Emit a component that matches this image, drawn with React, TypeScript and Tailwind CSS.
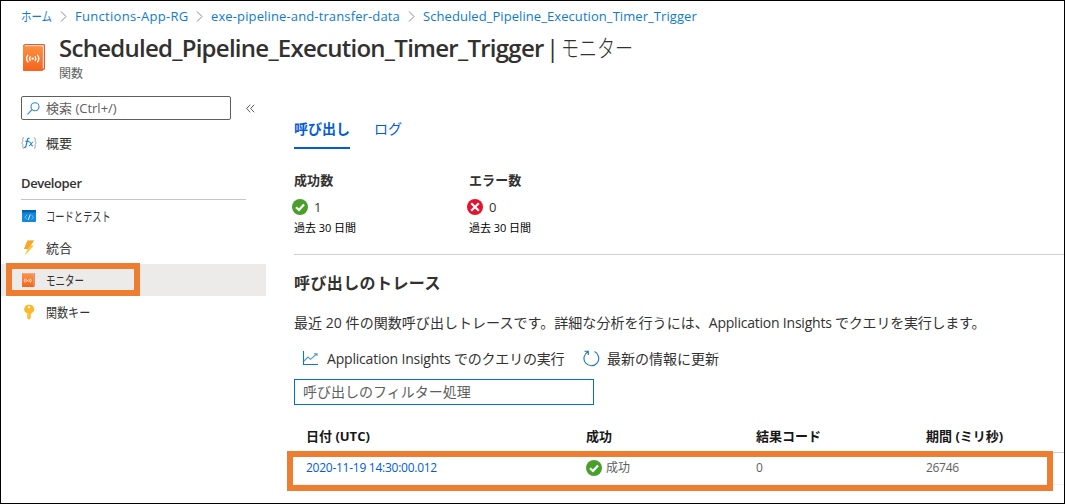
import type { ReactNode } from "react";

function Chevron() {
  return (
    <svg className="h-[11px] w-[7px] shrink-0" viewBox="0 0 7 11" fill="none" stroke="#8a8886" strokeWidth="1">
      <path d="M1 0.5 L6 5.5 L1 10.5" />
    </svg>
  );
}

function BookIcon({ className }: { className: string }) {
  return (
    <svg className={className} viewBox="0 0 22 27" fill="none" preserveAspectRatio="none">
      <defs>
        <linearGradient id="book" x1="0" y1="0" x2="0" y2="1">
          <stop offset="0" stopColor="#fc9040" />
          <stop offset="1" stopColor="#f4631e" />
        </linearGradient>
      </defs>
      <path d="M2.5 0 H20.8 Q22 0 22 1.2 V24.5 Q22 25.8 20.8 25.8 L19 27 H1.2 Q0 27 0 25.8 V2.5 Q0 0 2.5 0Z" fill="#dd6033" />
      <path d="M2.2 1.2 H20.8 V24.6 H19.6 V2.4 H1.4 Q1.4 1.2 2.2 1.2Z" fill="#fff3ea" />
      <path d="M0 2.5 H18 Q19.4 2.5 19.4 3.8 V27 H1.2 Q0 27 0 25.8Z" fill="url(#book)" />
      <circle cx="9.7" cy="14.6" r="1.2" fill="#fff" />
      <path d="M7.2 12.6 Q5.9 14.6 7.2 16.6 M12.2 12.6 Q13.5 14.6 12.2 16.6 M4.9 11.2 Q2.2 14.6 4.9 18 M14.5 11.2 Q17.2 14.6 14.5 18" stroke="#fff" strokeWidth="1.3" strokeLinecap="round" />
    </svg>
  );
}

function FunctionIcon() {
  return (
    <svg className="h-4 w-4" viewBox="0 0 16 16" fill="none">
      <path d="M3 2.5 Q1.8 2.5 1.8 4 V6.7 L0.7 8 L1.8 9.3 V12 Q1.8 13.5 3 13.5 M13 2.5 Q14.2 2.5 14.2 4 V6.7 L15.3 8 L14.2 9.3 V12 Q14.2 13.5 13 13.5" stroke="#a19f9d" strokeWidth="0.9" />
      <path d="M8.6 3.4 Q6.8 2.7 6.3 5.2 L5 11 Q4.5 12.9 3 12.4 M4.5 6.3 H8.2" stroke="#1b82d8" strokeWidth="1.2" />
      <path d="M8.2 7.2 Q9.3 6.5 9.8 8.1 L10.3 10 Q10.8 11.5 12 10.6 M12.3 7 Q11.3 6.7 10 9 Q9 11.2 7.8 10.7" stroke="#1b82d8" strokeWidth="1" />
    </svg>
  );
}

function CodeIcon() {
  return (
    <svg className="h-4 w-4" viewBox="0 0 16 16" fill="none">
      <path d="M1 2 H15 V13.3 Q15 14 14.3 14 H1.7 Q1 14 1 13.3Z" fill="#1287dc" />
      <path d="M1 2 H15 V4.5 H1Z" fill="#0062b2" />
      <path d="M6 7 L3.8 9.2 L6 11.4 M10.4 7 L12.6 9.2 L10.4 11.4" stroke="#6cc9f7" strokeWidth="1" />
      <path d="M9.2 6.6 L7.3 11.8" stroke="#fff" strokeWidth="0.9" />
    </svg>
  );
}

function BoltIcon() {
  return (
    <svg className="h-4 w-4" viewBox="0 0 16 16">
      <path d="M6.5 0.5 H13 L9.7 5.5 H13 L3.8 15.5 L6.5 9 H3Z" fill="#fcc634" />
      <path d="M6.5 0.5 H13 L9.7 5.5 L6.5 9 H3Z" fill="#f9a535" />
    </svg>
  );
}

function KeyIcon() {
  return (
    <svg className="h-4 w-4" viewBox="0 0 16 16">
      <path fillRule="evenodd" d="M8 0.8 A4.8 4.4 0 0 1 10.3 9.2 V10 L9.2 11 L10.3 12 L9.2 13 L10 13.8 L8 15.7 L6 13.8 V9.2 A4.8 4.4 0 0 1 8 0.8Z M8 2.2 A1.3 1.1 0 1 0 8 4.4 A1.3 1.1 0 1 0 8 2.2Z" fill="#fbb829" />
      <path d="M7 9 V13.2" stroke="#ffe08a" strokeWidth="0.8" />
    </svg>
  );
}

function StatusIcon({ ok }: { ok: boolean }) {
  return (
    <svg className="h-4 w-4 shrink-0" viewBox="0 0 16 16" fill="none">
      <circle cx="8" cy="8" r="8" fill={ok ? "#4a9e2c" : "#e8112d"} />
      <path d={ok ? "M4 8.2 L7 11 L12 5.4" : "M4.2 4.2 L11.8 11.8 M11.8 4.2 L4.2 11.8"} stroke="#fff" strokeWidth="2.2" />
    </svg>
  );
}

function NavItem({ icon, children, selected = false }: { icon: ReactNode; children: ReactNode; selected?: boolean }) {
  return (
    <li className={selected ? "relative flex h-8 items-center bg-[#edebe9] pl-5" : "relative flex h-8 items-center pl-5"}>
      {icon}
      <span className="ml-[9px] pt-0.5 text-[13px]">{children}</span>
      {selected && <span className="absolute -top-px left-[5px] h-[33px] w-[134px] border-6 border-[#ed7d31]" />}
    </li>
  );
}

function Stat({ title, value, ok }: { title: string; value: string; ok: boolean }) {
  return (
    <div className="w-[175px]">
      <h3 className="h-5 text-[13px] leading-5 font-semibold tracking-[0.1px]">{title}</h3>
      <div className="mt-[9px] -ml-0.5 flex h-4 items-center gap-1.5 text-[13px]">
        <StatusIcon ok={ok} />
        <span className="pt-0.5">{value}</span>
      </div>
      <p className="mt-1 h-[18px] text-[11px] leading-[18px] tracking-[-0.05px] text-black">過去 30 日間</p>
    </div>
  );
}

export default function App() {
  return (
    <div className="flex h-[504px] w-[1065px] flex-col overflow-hidden border border-black bg-white font-['Open_Sans','Noto_Sans_CJK_JP',sans-serif] whitespace-nowrap text-[#323130]">
      <nav className="flex h-[30px] items-center pt-px pl-5 text-[13px] text-[#0f7bcd]">
        <span className="w-[31px]"><span className="inline-block origin-left scale-x-[0.8]">ホーム</span></span>
        <span className="ml-2 flex items-center"><Chevron /></span>
        <span className="ml-2 w-[114px] tracking-[0.3px]">Functions-App-RG</span>
        <span className="ml-[7px] flex items-center"><Chevron /></span>
        <span className="ml-2 w-[190px] tracking-[0.13px]">exe-pipeline-and-transfer-data</span>
        <span className="ml-[7px] flex items-center"><Chevron /></span>
        <span className="ml-2 tracking-[0.07px]">Scheduled_Pipeline_Execution_Timer_Trigger</span>
      </nav>

      <header className="flex h-[58px] pl-[22px]">
        <BookIcon className="mt-[13px] h-[27px] w-[22px]" />
        <div className="ml-[14px]">
          <h1 className="flex h-[34px] text-[24px] leading-[34px]">
            <span className="w-[487px] font-semibold tracking-[-0.74px]">Scheduled_Pipeline_Execution_Timer_Trigger</span>
            <span className="w-[15px]">|</span>
            <span className="origin-left scale-x-[0.75] font-light">モニター</span>
          </h1>
          <p className="h-[18px] text-[12px] leading-[18px] text-[#605e5c]">関数</p>
        </div>
      </header>

      <div className="flex flex-1">
        <aside className="w-[265px] shrink-0 pt-[7px]">
          <div className="flex items-center pl-5">
            <div className="flex h-6 w-[210px] items-center rounded-xs border border-[#605e5c] pl-[5px] text-[13px] text-[#605e5c]">
              <svg className="h-[13px] w-[13px]" viewBox="0 0 13 13" fill="none" stroke="#2f86d0" strokeWidth="1.1">
                <circle cx="8" cy="4.8" r="4" />
                <path d="M5 7.7 L0.5 12.3" />
              </svg>
              <span className="ml-1.5 pt-px">検索 (Ctrl+/)</span>
            </div>
            <svg className="ml-[15px] h-[9px] w-[9px]" viewBox="0 0 9 9" fill="none" stroke="#605e5c" strokeWidth="1">
              <path d="M4.2 0.7 L0.7 4.5 L4.2 8.3 M8.2 0.7 L4.7 4.5 L8.2 8.3" />
            </svg>
          </div>
          <ul className="mt-[7px]">
            <NavItem icon={<FunctionIcon />}>概要</NavItem>
          </ul>
          <h2 className="mt-[13px] mr-5 ml-5 h-7 border-b border-[#c8c6c4] text-[13px] leading-[23px] font-semibold tracking-[-0.4px]">Developer</h2>
          <ul>
            <NavItem icon={<CodeIcon />}><span className="inline-block origin-left scale-x-[0.71]">コードとテスト</span></NavItem>
            <NavItem icon={<BoltIcon />}>統合</NavItem>
            <NavItem selected icon={<BookIcon className="mr-0.5 ml-px h-3.5 w-[13px]" />}><span className="inline-block origin-left scale-x-[0.73]">モニター</span></NavItem>
            <NavItem icon={<KeyIcon />}><span className="inline-block origin-left scale-x-[0.85]">関数キー</span></NavItem>
          </ul>
        </aside>

        <main className="flex-1 pt-7 pl-7">
          <div className="flex h-8 text-[14px] leading-[23px] text-[#015cda]">
            <span className="w-14 border-b-2 border-[#015cda] font-semibold">呼び出し</span>
            <span className="ml-6">ログ</span>
          </div>
          <section className="flex h-[106px] border-b border-[#d2d0ce] pt-[21px]">
            <Stat title="成功数" value="1" ok />
            <Stat title="エラー数" value="0" ok={false} />
          </section>
          <h2 className="mt-4 h-6 text-[16px] leading-6 font-bold tracking-[0.4px]">呼び出しのトレース</h2>
          <p className="mt-4 h-6 text-[14px] leading-6">
            <span className="tracking-[0.05px]">最近 20 件の関数呼び出しトレースです。詳細な分析を行うには、</span>
            <span className="tracking-[-0.22px]">Application Insights でクエリを実行します。</span>
          </p>
          <div className="mt-[11px] flex h-6 items-center pl-2 text-[14px]">
            <svg className="h-4 w-[17px]" viewBox="0 0 17 16" fill="none" strokeWidth="1.1">
              <path d="M1.5 1 V14.5 H16" stroke="#0f74c4" />
              <path d="M2 11 L6 7 L8.5 9.3 L14.5 4 M12 3.7 H15 V6" stroke="#4f9bc7" />
            </svg>
            <span className="ml-2 w-[247px] tracking-[-0.19px]">Application Insights でのクエリの実行</span>
            <svg className="ml-[9px] h-[17px] w-[17px]" viewBox="0 0 17 17" fill="none" stroke="#1773ba" strokeWidth="1.1">
              <path d="M11.5 1.6 A7.4 7.4 0 1 1 5 1.7 M1.5 1.2 H5.3 V5" />
            </svg>
            <span className="ml-[7px]">最新の情報に更新</span>
          </div>
          <div className="mt-[9px] flex h-[26px] w-[300px] items-center border border-[#0073c6] pb-0.5 pl-2 text-[14px] text-[#605e5c]">呼び出しのフィルター処理</div>
          <div className="relative mt-[15px]">
            <div className="grid h-[33px] grid-cols-[280px_170px_170px_1fr] border-b border-[#c8d0d9] pl-3 text-[13px] leading-8 font-bold text-[#171717]">
              <span>日付 (UTC)</span>
              <span>成功</span>
              <span>結果コード</span>
              <span>期間 (ミリ秒)</span>
            </div>
            <div className="grid h-8 grid-cols-[280px_170px_170px_1fr] items-center border-b border-[#f3f2f1] pb-0.5 pl-3 text-[12px] text-[#605e5c]">
              <span className="tracking-[-0.26px] text-[#015cda]">2020-11-19 14:30:00.012</span>
              <span className="flex items-center gap-1"><StatusIcon ok />成功</span>
              <span>0</span>
              <span className="tracking-[-0.3px]">26746</span>
            </div>
            <div className="absolute top-[31px] -left-[7px] h-10 w-[766px] border-6 border-[#ed7d31]" />
          </div>
        </main>
      </div>
    </div>
  );
}
